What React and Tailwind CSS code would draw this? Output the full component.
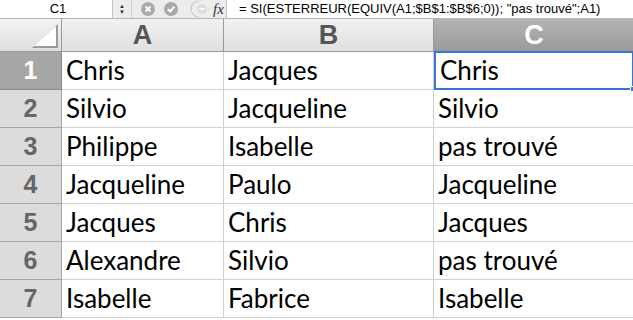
import React from "react";

const rows = [
  ["Chris", "Jacques", "Chris"],
  ["Silvio", "Jacqueline", "Silvio"],
  ["Philippe", "Isabelle", "pas trouvé"],
  ["Jacqueline", "Paulo", "Jacqueline"],
  ["Jacques", "Chris", "Jacques"],
  ["Alexandre", "Silvio", "pas trouvé"],
  ["Isabelle", "Fabrice", "Isabelle"],
];

function FormulaBar() {
  return (
    <div className="flex h-[19px] border-b border-[#b5b5b5] bg-white text-[13px] leading-[18px] text-black font-['Liberation_Sans',sans-serif]">
      <div className="w-[112px] text-center pl-1">C1</div>
      <div className="flex items-center bg-[#ececec] border-l border-[#c4c4c4] w-[114px]">
        <div className="w-[18px] flex flex-col items-center justify-center text-[#333] leading-none">
          <span className="text-[6px]">▲</span>
          <span className="text-[6px]">▼</span>
        </div>
        <div className="h-full border-l border-[#cfcfcf]" />
        <div className="flex items-center gap-[9px] pl-[9px]">
          <svg width="14" height="14" viewBox="0 0 14 14">
            <circle cx="7" cy="7" r="7" fill="#a9a9a9" />
            <path d="M4.5 4.5 L9.5 9.5 M9.5 4.5 L4.5 9.5" stroke="#fff" strokeWidth="2" />
          </svg>
          <svg width="14" height="14" viewBox="0 0 14 14">
            <circle cx="7" cy="7" r="7" fill="#a9a9a9" />
            <path d="M3.8 7.2 L6.2 9.5 L10.2 4.6" stroke="#fff" strokeWidth="2" fill="none" />
          </svg>
          <svg width="18" height="18" viewBox="0 0 18 18" className="ml-[3px]">
            <path d="M9 1 A8 8 0 0 0 9 17" stroke="#c9c9c9" strokeWidth="1.2" fill="none" />
            <circle cx="12" cy="9" r="5" fill="#dcdcdc" />
            <path d="M9.5 9 H14.5" stroke="#fff" strokeWidth="1.5" />
          </svg>
          <span className="italic font-['Liberation_Serif',serif] text-[15px] text-[#333] -ml-[4px]">fx</span>
        </div>
      </div>
      <div className="flex-1 border-l border-[#c4c4c4] pl-[12px] whitespace-nowrap">
        = SI(ESTERREUR(EQUIV(A1;$B$1:$B$6;0)); "pas trouvé";A1)
      </div>
    </div>
  );
}

export default function App() {
  return (
    <div className="w-[633px] h-[320px] overflow-hidden bg-white">
      <FormulaBar />
      <div className="grid grid-cols-[62px_162px_210px_200px] grid-rows-[33px_repeat(7,38px)]">
        {/* corner */}
        <div className="relative bg-gradient-to-b from-[#f3f3f3] to-[#dedede] border-r border-b border-[#9a9a9a]">
          <svg className="absolute right-[3px] bottom-[3px]" width="26" height="24" viewBox="0 0 26 24">
            <path d="M26 0 L26 24 L0 24 Z" fill="#9b9b9b" />
            <path d="M24 2 L24 22 L2 22 Z" fill="#fff" />
          </svg>
        </div>
        {["A", "B"].map((c) => (
          <div
            key={c}
            className="flex items-center justify-center bg-gradient-to-b from-[#f1f1f1] to-[#e0e0e0] border-r border-b border-[#9a9a9a] text-[#565656] text-[27px] font-bold font-['Liberation_Sans',sans-serif]"
          >
            {c}
          </div>
        ))}
        <div className="flex items-center justify-center bg-gradient-to-b from-[#b4b4b4] to-[#9a9a9a] border-b border-[#8a8a8a] text-white text-[27px] font-bold font-['Liberation_Sans',sans-serif]">
          C
        </div>

        {rows.map((r, i) => (
          <React.Fragment key={i}>
            <div
              className={
                i === 0
                  ? "flex items-center justify-center bg-[#a6a6a6] border-r border-b border-[#8a8a8a] text-white text-[25px] font-bold font-['Liberation_Sans',sans-serif]"
                  : "flex items-center justify-center bg-[#dcdcdc] border-r border-b border-[#a6a6a6] text-[#666] text-[25px] font-bold font-['Liberation_Sans',sans-serif]"
              }
            >
              {i + 1}
            </div>
            {r.map((v, j) => (
              <div
                key={j}
                className={
                  i === 0 && j === 2
                    ? "relative flex items-center pl-[4px] border-2 border-[#3b74d4] text-black text-[26px] font-['Lato',sans-serif] -mt-px"
                    : "flex items-center pl-[4px] border-r border-b border-[#d0d0d0] text-black text-[26px] font-['Lato',sans-serif]"
                }
              >
                {v}
                {i === 0 && j === 2 && (
                  <div className="absolute -right-[4px] -bottom-[4px] w-[6px] h-[6px] bg-[#3b74d4] border border-white" />
                )}
              </div>
            ))}
          </React.Fragment>
        ))}
      </div>
    </div>
  );
}
